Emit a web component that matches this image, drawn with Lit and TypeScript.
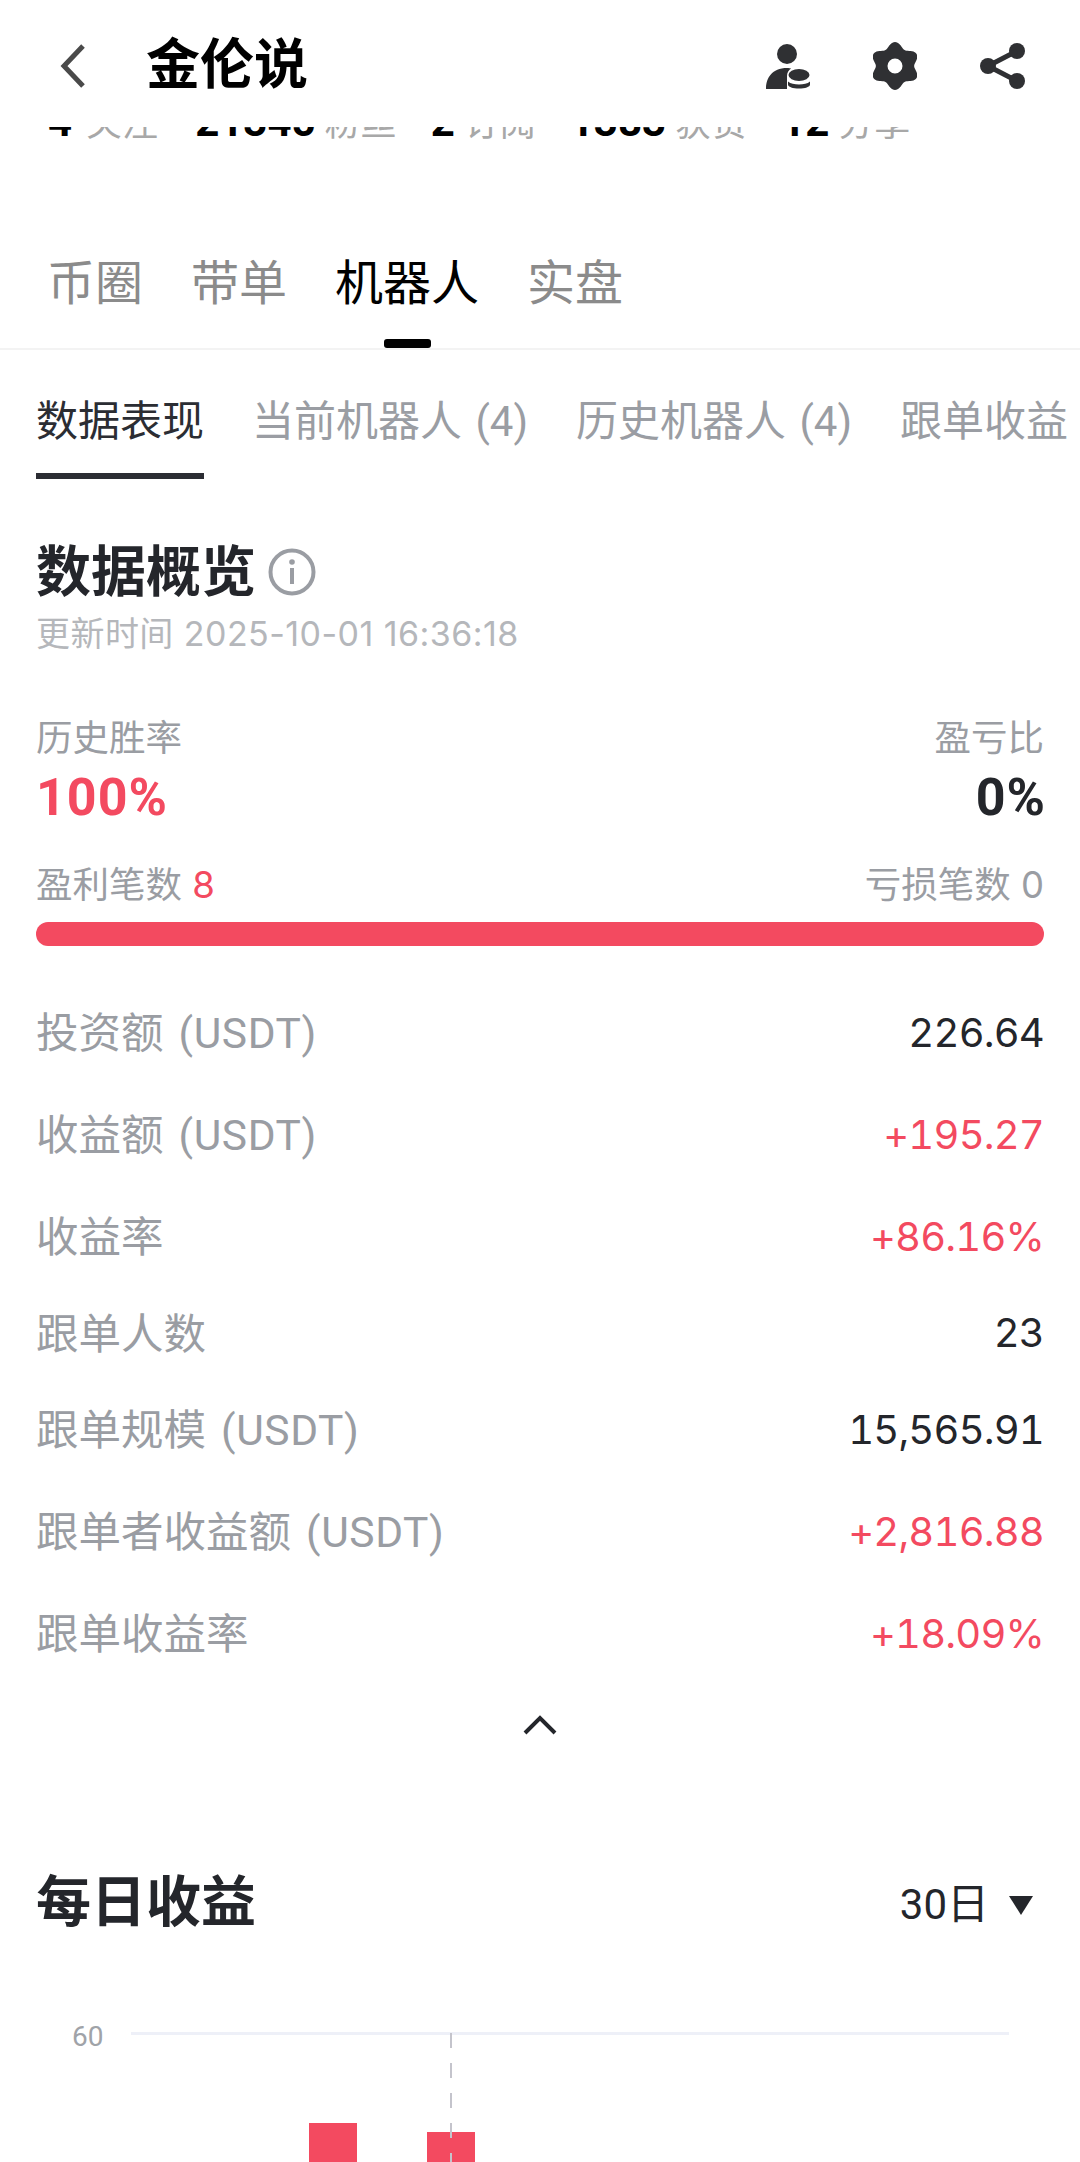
import { LitElement, html, css, svg } from 'lit'
import { customElement } from 'lit/decorators.js'

const stats = [
    ['4', '关注'],
    ['21345', '粉丝'],
    ['2', '订阅'],
    ['1383', '获赞'],
    ['12', '分享']
]

const rows = [
    { label: '投资额', unit: '(USDT)', value: '226.64', up: false },
    { label: '收益额', unit: '(USDT)', value: '+195.27', up: true },
    { label: '收益率', value: '+86.16%', up: true },
    { label: '跟单人数', value: '23', up: false, short: true },
    { label: '跟单规模', unit: '(USDT)', value: '15,565.91', up: false },
    { label: '跟单者收益额', unit: '(USDT)', value: '+2,816.88', up: true },
    { label: '跟单收益率', value: '+18.09%', up: true }
]

const ICON = '#2f3033'

// six lobes around the centre, hole punched by evenodd
function gearPath() {
    const pts: string[] = []
    for (let i = 0; i < 120; i++) {
        const a = (i / 120) * Math.PI * 2
        const r = 21.2 + 2.8 * Math.cos(6 * a)
        pts.push(`${(22 + Math.sin(a) * r * 1.04).toFixed(2)} ${(24 - Math.cos(a) * r).toFixed(2)}`)
    }
    return `M${pts.join('L')}ZM22 16.500a7.500 7.500 0 1 0 0 15 7.500 7.500 0 0 0 0-15z`
}

@customElement('app-root')
export class AppRoot extends LitElement {
    static styles = css`
        :host {
            display: block;
            width: 1080px;
            height: 2162px;
            overflow: hidden;
            background: #fff;
            font-family: Roboto, 'Noto Sans CJK SC', sans-serif;
            color: #24262b;
        }

        .num {
            font-family: Inter, 'Noto Sans CJK SC', sans-serif;
        }

        .top {
            display: flex;
            align-items: center;
            height: 127px;
            padding: 5px 53px 0 56px;
            box-sizing: border-box;
        }

        .back {
            width: 34px;
            height: 48px;
            margin-right: 56px;
        }

        .name {
            flex: 1;
            font-size: 54px;
            font-weight: 700;
            color: #000;
            line-height: 1;
        }

        .top-icons {
            display: flex;
            align-items: center;
            gap: 59px;
        }

        .gear {
            margin-right: 3px;
        }

        .stats {
            display: flex;
            align-items: flex-end;
            height: 13px;
            overflow: hidden;
            padding-left: 48px;
            line-height: 38px;
        }

        .stat {
            display: flex;
            align-items: baseline;
            gap: 9px;
            margin-right: 34px;
            margin-bottom: -3px;
        }

        .stat:first-child {
            margin-right: 37px;
        }

        .stat:first-child span {
            margin-left: 5px;
        }

        .stat b {
            font-size: 42px;
            color: #000;
        }

        .stat span {
            font-size: 36px;
            color: #a8a8a8;
        }

        .tabs {
            display: flex;
            gap: 48px;
            height: 210px;
            padding-left: 47px;
            align-items: flex-end;
            border-bottom: 2px solid #f3f3f3;
            box-sizing: border-box;
        }

        .tab {
            position: relative;
            font-size: 48px;
            line-height: 66px;
            padding-bottom: 31px;
            color: #8b8b8b;
        }

        .tab.on {
            color: #000;
        }

        .tab.on::after {
            content: '';
            position: absolute;
            left: 50%;
            bottom: 0;
            width: 47px;
            height: 9px;
            margin-left: -23px;
            border-radius: 3px;
            background: #000;
        }

        .sub {
            display: flex;
            gap: 48px;
            padding-left: 36px;
            height: 129px;
            box-sizing: border-box;
            white-space: nowrap;
            overflow: hidden;
        }

        .sub div {
            font-size: 42px;
            line-height: 58px;
            padding-top: 43px;
            word-spacing: 3px;
            color: #9a9da3;
        }

        .sub .on {
            color: #2b2d33;
            border-bottom: 6px solid #2b2d33;
            box-sizing: border-box;
        }

        .section {
            padding: 0 36px;
        }

        .heading {
            display: flex;
            align-items: center;
            gap: 12px;
            margin-top: 56px;
            font-size: 55px;
            font-weight: 700;
            line-height: 74px;
        }

        .updated {
            margin-top: 2px;
            font-size: 34px;
            line-height: 46px;
            letter-spacing: 0.45px;
            color: #b5b7bb;
        }

        .split {
            display: flex;
            justify-content: space-between;
        }

        .ratio {
            margin-top: 57px;
            font-size: 36.5px;
            line-height: 50px;
            color: #9a9da3;
        }

        .big {
            margin-top: 6px;
            font-size: 52px;
            font-weight: 700;
            line-height: 56px;
            letter-spacing: 1px;
        }

        .big span:last-child {
            margin-right: -2px;
        }

        .red {
            color: #f34a60;
        }

        .counts {
            margin-top: 34px;
            font-size: 36.5px;
            line-height: 50px;
            color: #9a9da3;
        }

        .bar {
            height: 24px;
            margin-top: 12px;
            border-radius: 12px;
            background: #f34a60;
        }

        .rows {
            margin-top: 34px;
        }

        .row {
            display: flex;
            justify-content: space-between;
            align-items: center;
            height: 102px;
            font-size: 42.5px;
            color: #9a9da3;
        }

        .row.short {
            height: 91px;
        }

        .row .label {
            padding-bottom: 3px;
        }

        .row .unit {
            margin-left: 15px;
            letter-spacing: 0.6px;
        }

        .row b {
            padding-top: 2px;
            font-size: 40px;
            font-weight: 400;
            font-variant-numeric: tabular-nums;
            letter-spacing: -0.8px;
            color: #24262b;
        }

        .row b.red {
            color: #f34a60;
        }

        .more {
            display: flex;
            justify-content: center;
            margin-top: 31px;
        }

        .daily {
            display: flex;
            justify-content: space-between;
            align-items: center;
            margin-top: 129px;
        }

        .daily h2 {
            margin: 0;
            font-size: 55px;
            font-weight: 700;
            line-height: 74px;
        }

        .range {
            display: flex;
            align-items: center;
            gap: 20px;
            padding: 0 11px 4px 0;
            font-size: 42px;
        }

        .caret {
            width: 0;
            height: 0;
            margin-top: 10px;
            border-left: 12px solid transparent;
            border-right: 12px solid transparent;
            border-top: 19px solid #24262b;
        }

        .chart {
            display: block;
            margin-top: 71px;
        }
    `

    renderTopIcons() {
        return html`<div class="top-icons">
            <svg width="48" height="48" viewBox="0 0 48 48">
                <circle cx="21" cy="12" r="10" fill="${ICON}" />
                <path d="M0 47c0-11 6-21 21-21 2 0 3 .2 4 .6-2.500 2-4 4.400-4 7.400v13z" fill="${ICON}" />
                <ellipse cx="33" cy="33" rx="10.500" ry="6" fill="${ICON}" />
                <path d="M22 39.500c2.500 2.300 6.500 3 11 3s8.500-.7 11-3v3c0 2.500-5 4-11 4s-11-1.500-11-4z" fill="${ICON}" />
            </svg>
            <svg class="gear" width="44" height="48" viewBox="0 0 44 48">
                <path d="${gearPath()}" fill="${ICON}" fill-rule="evenodd" />
            </svg>
            <svg width="48" height="48" viewBox="0 0 48 48">
                <g fill="${ICON}">
                    <circle cx="38" cy="9" r="8" />
                    <circle cx="9" cy="24" r="8" />
                    <circle cx="38" cy="39" r="8" />
                </g>
                <path d="M38 9L9 24l29 15" fill="none" stroke="${ICON}" stroke-width="5" />
            </svg>
        </div>`
    }

    renderChart() {
        // origin is at x=36 because of the section padding, grid line at y=23
        return html`<svg class="chart" width="1008" height="160" viewBox="0 0 1008 160">
            ${svg`
                <text x="36" y="36" font-size="28" fill="#a0a3a8" font-family="Roboto">60</text>
                <rect x="95" y="22" width="878" height="3" fill="#eef0f8" />
                <rect x="273" y="113" width="48" height="60" fill="#f34a60" />
                <rect x="391" y="122" width="48" height="60" fill="#f34a60" />
                <line x1="415" y1="23" x2="415" y2="160" stroke="#c4c4cc" stroke-width="2" stroke-dasharray="15 15" />
            `}
        </svg>`
    }

    render() {
        return html`
            <div class="top">
                <svg class="back" viewBox="0 0 34 48">
                    <path d="M27 4L8 24l19 20" fill="none" stroke="#4a4a4a" stroke-width="5" />
                </svg>
                <div class="name">金伦说</div>
                ${this.renderTopIcons()}
            </div>
            <div class="stats">
                ${stats.map(([n, t]) => html`<div class="stat"><b>${n}</b><span>${t}</span></div>`)}
            </div>
            <div class="tabs">
                <div class="tab">币圈</div>
                <div class="tab">带单</div>
                <div class="tab on">机器人</div>
                <div class="tab">实盘</div>
            </div>
            <div class="sub">
                <div class="on">数据表现</div>
                <div>当前机器人 (4)</div>
                <div>历史机器人 (4)</div>
                <div>跟单收益</div>
            </div>
            <div class="section">
                <div class="heading">
                    数据概览
                    <svg width="48" height="48" viewBox="0 0 48 48">
                        <circle cx="24" cy="24" r="21.500" fill="none" stroke="#9a9da3" stroke-width="4" />
                        <circle cx="24" cy="14" r="2.800" fill="#9a9da3" />
                        <rect x="22" y="20" width="4" height="16" fill="#9a9da3" />
                    </svg>
                </div>
                <div class="updated num">更新时间 2025-10-01 16:36:18</div>
                <div class="split ratio"><span>历史胜率</span><span>盈亏比</span></div>
                <div class="split big"><span class="red">100%</span><span>0%</span></div>
                <div class="split counts num">
                    <span>盈利笔数 <span class="red">8</span></span>
                    <span>亏损笔数 0</span>
                </div>
                <div class="bar"></div>
                <div class="rows">
                    ${rows.map(
                        r => html`<div class="row ${r.short ? 'short' : ''}">
                            <span class="label">${r.label}${r.unit ? html`<span class="unit">${r.unit}</span>` : ''}</span>
                            <b class="num ${r.up ? 'red' : ''}">${r.value}</b>
                        </div>`
                    )}
                </div>
                <div class="more">
                    <svg width="36" height="22" viewBox="0 0 36 22">
                        <path d="M3 19L18 4l15 15" fill="none" stroke="#24262b" stroke-width="4" />
                    </svg>
                </div>
                <div class="daily">
                    <h2>每日收益</h2>
                    <div class="range">30日 <i class="caret"></i></div>
                </div>
                ${this.renderChart()}
            </div>
        `
    }
}
